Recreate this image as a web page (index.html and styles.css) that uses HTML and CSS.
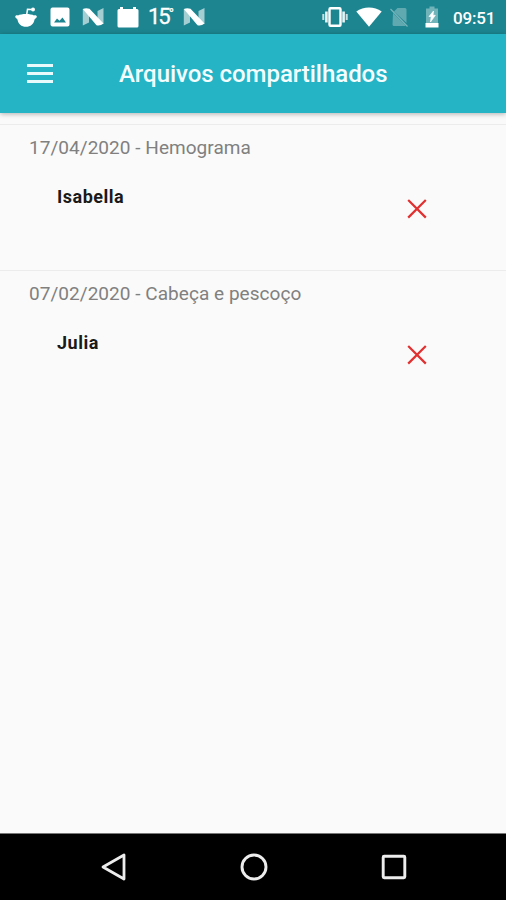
FILE: index.html
```html
<!DOCTYPE html>
<html lang="pt-BR">

<head>
    <meta charset="UTF-8">
    <meta name="viewport" content="width=device-width, initial-scale=1.0">
    <title>Arquivos compartilhados</title>
    <link rel="stylesheet" href="styles.css">
</head>

<body>
    <div class="status-bar">
        <div class="notifications">
            <svg width="22" height="22" viewBox="0 0 22 22">
                <path d="M11.500 10 L12.500 3.300 L16.500 3.500" fill="none" stroke="#fff" stroke-width="1.500" />
                <circle cx="18" cy="3.5" r="2" fill="#fff" />
                <path d="M3 9.500 C6 7.500 16 7.500 19 9.500 C21 8.500 23 10.500 21 12 L19.500 13.500 C19 18 15.500 20.800 11 20.800 C6.500 20.800 3 18 2.500 13.500 L1 12 C-.8 10.500 1 8.500 3 9.500Z" fill="#fff" />
            </svg>
            <svg width="20" height="20" viewBox="0 0 20 20">
                <path d="M2.500 .5 H17.500 Q19.500 .5 19.500 2.500 V17.500 Q19.500 19.500 17.500 19.500 H2.500 Q.5 19.500 .5 17.500 V2.500 Q.5 .5 2.500 .5Z M4 15.500 H16 L12.500 10.500 L9.500 13.800 L7 11.500Z" fill="#fff" fill-rule="evenodd" />
            </svg>
            <svg width="22" height="20" viewBox="0 0 22 20">
                <path d="M.8 2 L7 5 V15.500 L.8 18.500Z M15.500 4 L21.500 1 V17 L15.500 13Z" fill="#fff" opacity=".6" />
                <path d="M.8 2 Q4 .8 7.500 1.800 L21.500 16.500 Q18.500 19 14.500 18.200Z" fill="#fff" />
            </svg>
            <svg width="22" height="22" viewBox="0 0 22 22">
                <path d="M.5 4.500 Q.5 3 2 3 H3 V1 H6 V3 H16 V1 H19 V3 H20 Q21.500 3 21.500 4.500 V20 Q21.500 21.500 20 21.500 H2 Q.5 21.500 .5 20Z" fill="#fff" />
            </svg>
            <span class="temperature">15<i>°</i></span>
            <svg width="22" height="20" viewBox="0 0 22 20">
                <path d="M.8 2 L7 5 V15.500 L.8 18.500Z M15.500 4 L21.500 1 V17 L15.500 13Z" fill="#fff" opacity=".6" />
                <path d="M.8 2 Q4 .8 7.500 1.800 L21.500 16.500 Q18.500 19 14.500 18.200Z" fill="#fff" />
            </svg>
        </div>
        <div class="system">
            <svg class="vibrate" width="26" height="20" viewBox="0 0 26 20">
                <rect x="7.500" y="1.200" width="11" height="17.600" rx="1" fill="none" stroke="#fff" stroke-width="2.400" />
                <path d="M4.400 4.500 V15.500 M21.600 4.500 V15.500" stroke="#fff" stroke-width="2.600" opacity=".9" />
                <path d="M1.300 7 V13 M24.700 7 V13" stroke="#fff" stroke-width="2" opacity=".75" />
            </svg>
            <svg class="wifi" width="26" height="20" viewBox="0 0 26 20">
                <path d="M.3 4.500 C7.500 -1 18.500 -1 25.700 4.500 L13 19.800Z" fill="#fff" />
            </svg>
            <svg class="sim" width="18" height="20" viewBox="0 0 18 20">
                <path d="M7.500 1 H15 Q16.500 1 16.500 2.500 V16 L4 4.500Z M3 6 L15.500 18.500 Q15 19 14.500 19 H4 Q2.500 19 2.500 17.500Z" fill="#fff" opacity=".3" />
                <path d="M.5 2 L17.500 19.500" stroke="#fff" stroke-width="1.200" opacity=".4" />
            </svg>
            <svg class="battery" width="14" height="22" viewBox="0 0 14 22">
                <path d="M4.500 .5 H9.500 V2.500 H13 V17 H1 V2.500 H4.500Z" fill="#fff" opacity=".38" />
                <path d="M.5 17 H13.500 V21.500 H.5Z" fill="#fff" />
                <path d="M8.500 5 L4 10.500 H6.200 L5.500 16 L10.300 9.300 H8Z" fill="#fff" stroke="#fff" stroke-width=".7" />
            </svg>
            <span class="clock">09:51</span>
        </div>
    </div>

    <header class="app-bar">
        <button class="menu" aria-label="Menu">
            <span></span>
            <span></span>
            <span></span>
        </button>
        <h1>Arquivos compartilhados</h1>
    </header>

    <main class="list">
        <section class="file">
            <h2>17/04/2020 - Hemograma</h2>
            <div class="person">
                <span class="name">Isabella</span>
                <button class="remove" aria-label="Remover">
                    <svg width="20" height="20" viewBox="0 0 20 20">
                        <path d="M1.200 1 L18.800 18.600 M18.800 1 L1.200 18.600" stroke="#e22f2f" stroke-width="2.200" />
                    </svg>
                </button>
            </div>
        </section>
        <section class="file">
            <h2>07/02/2020 - Cabeça e pescoço</h2>
            <div class="person">
                <span class="name">Julia</span>
                <button class="remove" aria-label="Remover">
                    <svg width="20" height="20" viewBox="0 0 20 20">
                        <path d="M1.200 1 L18.800 18.600 M18.800 1 L1.200 18.600" stroke="#e22f2f" stroke-width="2.200" />
                    </svg>
                </button>
            </div>
        </section>
    </main>

    <nav class="nav-bar">
        <svg width="26" height="30" viewBox="0 0 26 30">
            <path d="M24 3 V27 L3 15Z" fill="none" stroke="#ededed" stroke-width="2.800" stroke-linejoin="round" />
        </svg>
        <svg width="28" height="28" viewBox="0 0 28 28">
            <circle cx="14" cy="14" r="12" fill="none" stroke="#ededed" stroke-width="2.900" />
        </svg>
        <svg width="26" height="26" viewBox="0 0 26 26">
            <rect x="2.200" y="2.200" width="21.600" height="21.600" rx="1" fill="none" stroke="#ededed" stroke-width="2.900" />
        </svg>
    </nav>
</body>

</html>
```

FILE: styles.css
```css
body {
    margin: 0;
    height: 100vh;
    display: flex;
    flex-direction: column;
    background: #fafafa;
    font-family: Roboto, "Liberation Sans", sans-serif;
    overflow: hidden;
}

svg {
    display: block;
    flex-shrink: 0;
}

button {
    padding: 0;
    border: none;
    background: none;
    cursor: pointer;
}

.status-bar {
    box-sizing: border-box;
    height: 34px;
    padding: 0 11px 0 15px;
    display: flex;
    align-items: center;
    justify-content: space-between;
    background: #1c8590;
    color: #fff;
}

.notifications {
    display: flex;
    align-items: center;
    gap: 12.5px;
}

.temperature {
    width: 23px;
    margin: 0 -1px 0 -3px;
    font-size: 22px;
    line-height: 22px;
    letter-spacing: -2px;
    white-space: nowrap;
    -webkit-text-stroke: 0.3px #fff;
}

.temperature i {
    font-size: 14px;
    font-style: normal;
    line-height: 14px;
    vertical-align: 5px;
}

.system {
    display: flex;
    align-items: center;
}

.wifi {
    margin-left: 8px;
}

.sim {
    margin-left: 8px;
}

.battery {
    margin-left: 17px;
}

.clock {
    width: 42px;
    margin-left: 14px;
    padding-top: 1px;
    font-size: 17px;
    font-weight: 500;
    letter-spacing: -0.2px;
    white-space: nowrap;
}

.app-bar {
    box-sizing: border-box;
    height: 79px;
    padding-left: 27px;
    display: flex;
    align-items: center;
    background: #24b4c6;
    box-shadow: 0 1px 5px rgba(0, 0, 0, 0.3);
}

.menu {
    width: 26px;
    display: flex;
    flex-direction: column;
    gap: 5px;
}

.menu span {
    width: 26px;
    height: 3px;
    background: #e9fafc;
}

h1 {
    margin: 0 0 0 66px;
    color: #f4feff;
    font-size: 24px;
    font-weight: 500;
    letter-spacing: -0.04px;
    white-space: nowrap;
}

.list {
    flex: 1;
    padding-top: 11px;
}

.file {
    box-sizing: border-box;
    height: 146px;
    padding: 12px 79px 0 29px;
    border-top: 1px solid #ececec;
}

h2 {
    margin: 0;
    color: #808080;
    font-size: 19px;
    font-weight: 400;
    letter-spacing: 0.04px;
    line-height: 22px;
    white-space: nowrap;
}

.person {
    padding: 27px 0 0 28px;
    display: flex;
    justify-content: space-between;
}

.name {
    color: #1a1a1a;
    font-size: 18px;
    font-weight: 700;
    letter-spacing: 0.5px;
    line-height: 22px;
}

.remove {
    margin-top: 13px;
}

.nav-bar {
    box-sizing: border-box;
    height: 67px;
    padding: 0 99px 0 100px;
    display: flex;
    align-items: center;
    justify-content: space-between;
    background: #000;
    border-top: 1px solid #777;
}
```
